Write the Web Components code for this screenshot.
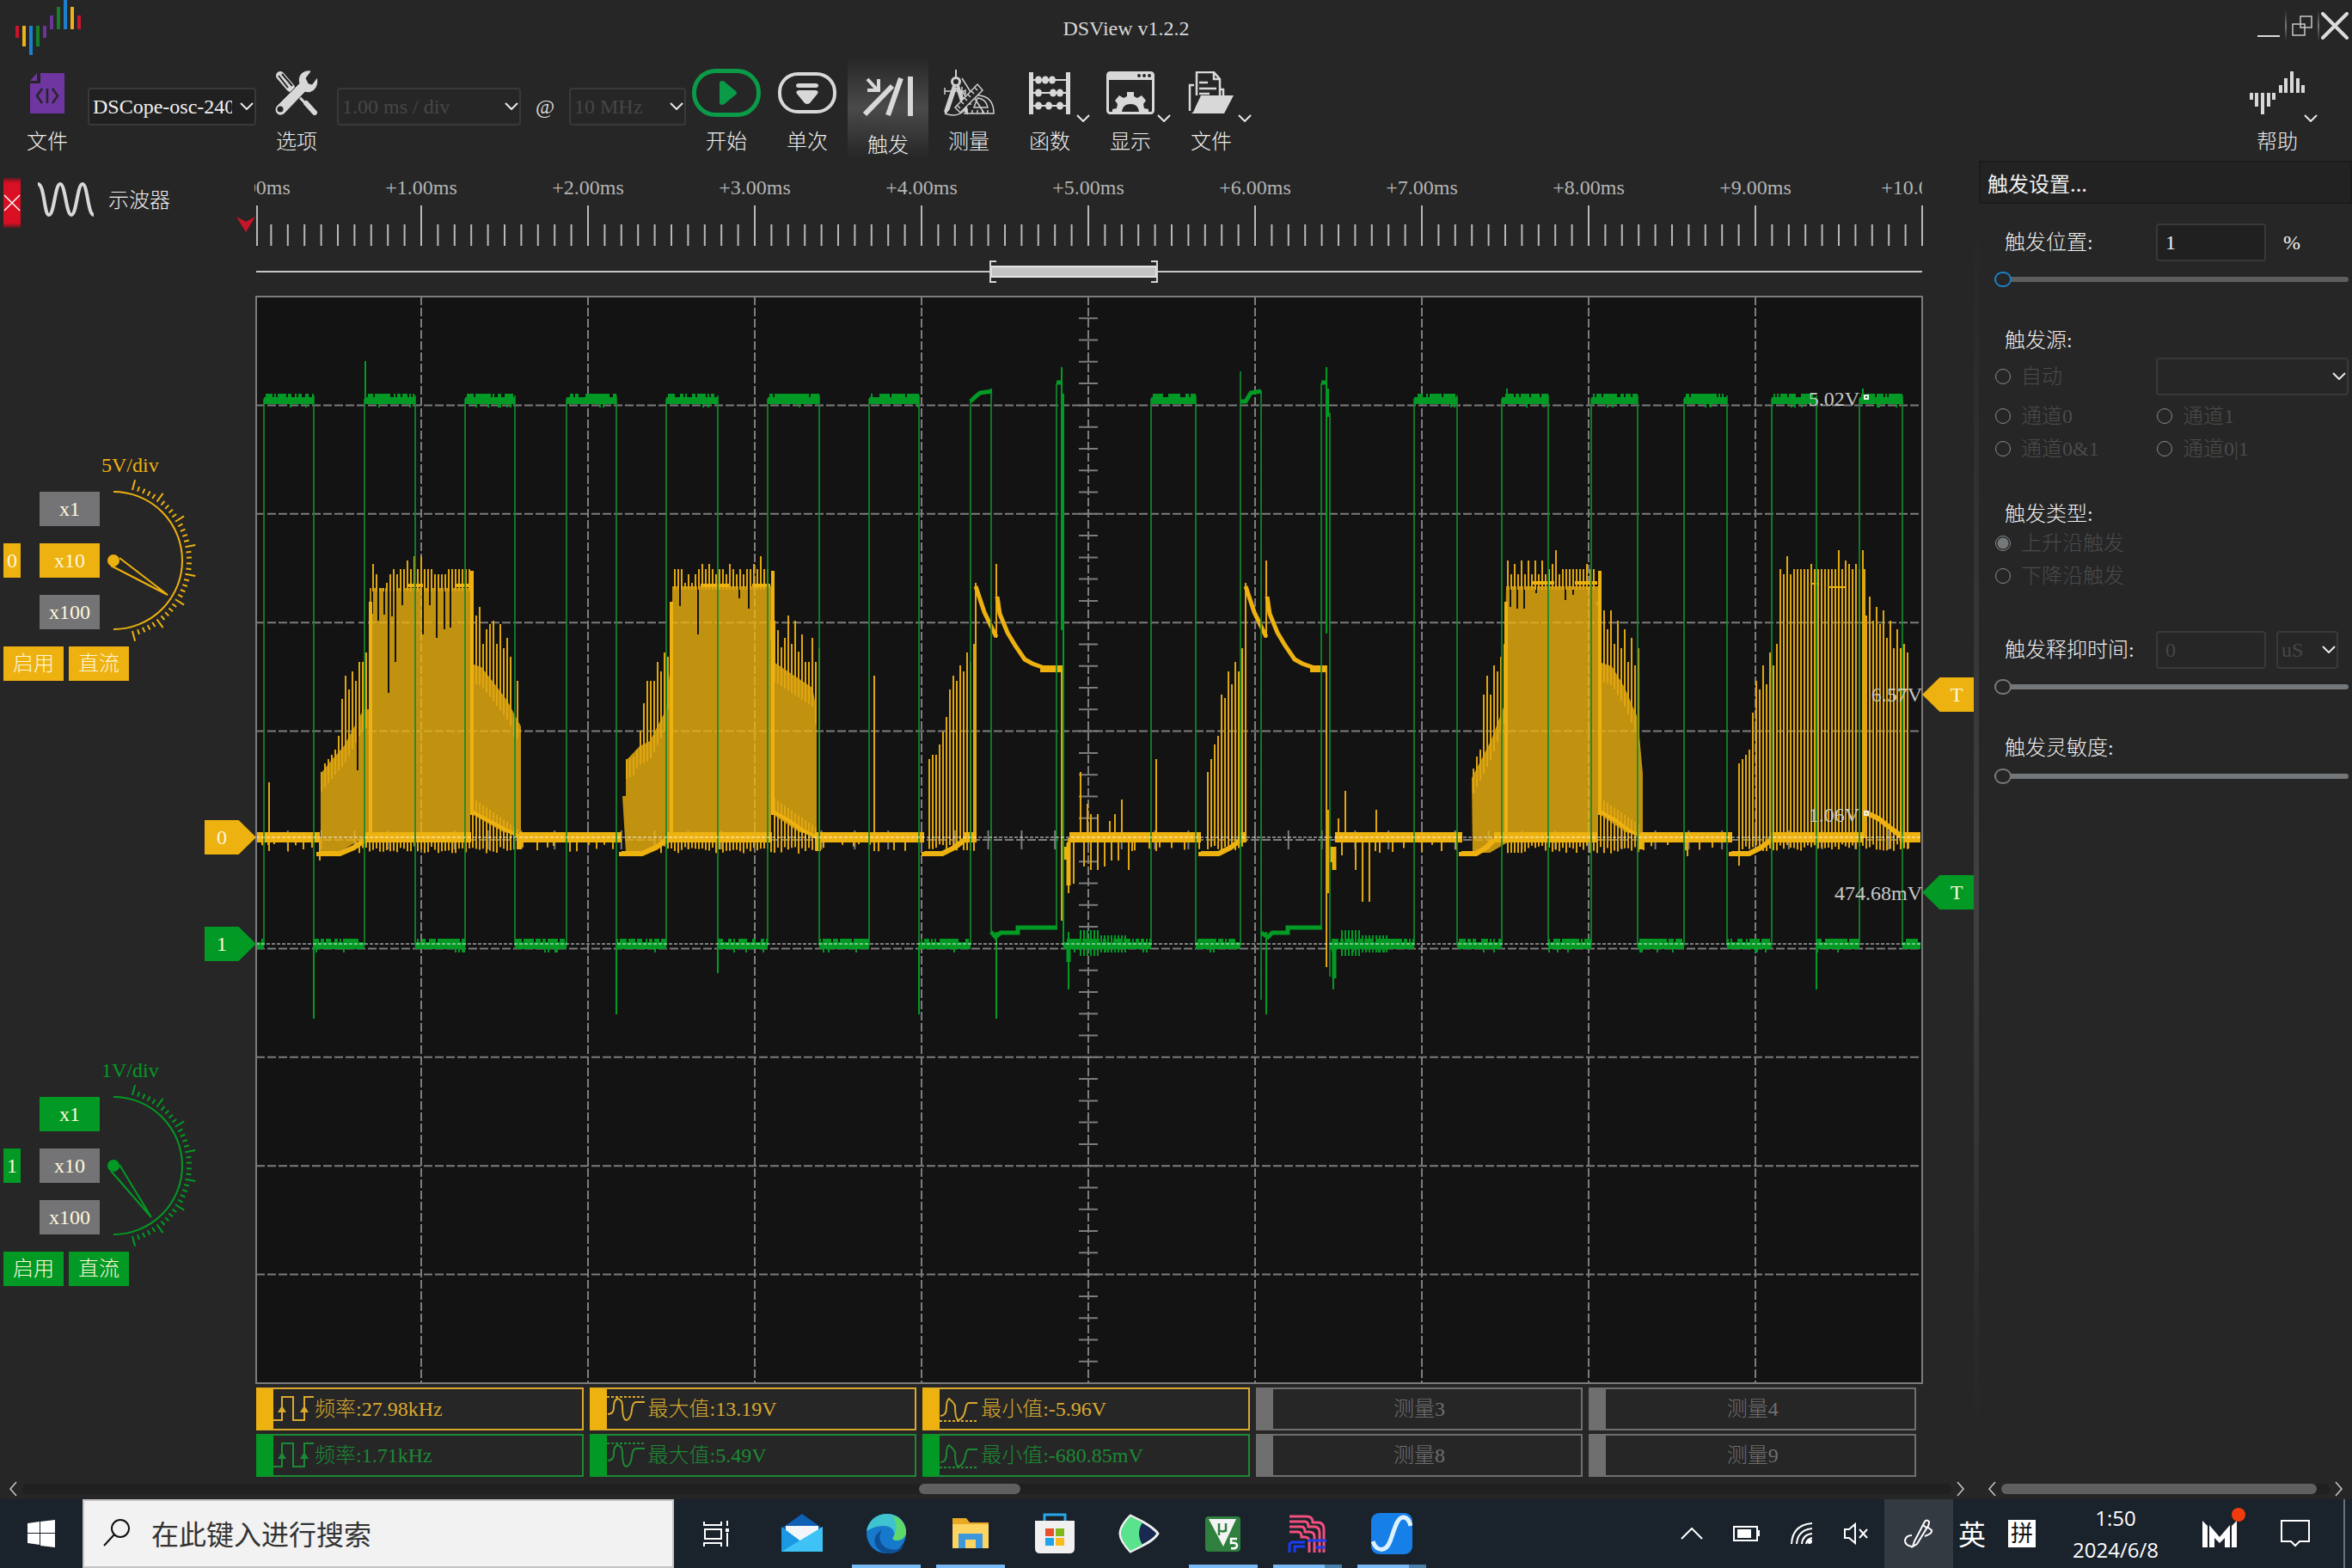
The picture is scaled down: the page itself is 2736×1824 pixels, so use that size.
<!DOCTYPE html>
<html lang="zh-CN">
<head>
<meta charset="utf-8">
<title>DSView v1.2.2</title>
<style>
    html, body { margin: 0; height: 100%; }
    body {
        --amber: #edb110;
        --green: #029a24;
        --line: #393939;
        background: #262626;
        color: #f0f0f0;
        font: 24px/30px "Liberation Serif", "Noto Sans CJK SC", serif;
        font-weight: 300;
        overflow: hidden;
    }
</style>
</head>
<body>
<dso-app></dso-app>

<script>
// shared rules for form controls inside the shadow roots
const baseCss = `
    *, *::before { box-sizing: border-box; }
    button, input, select { font: inherit; color: inherit; margin: 0; padding: 0; border: 0; background: none; }
    svg { display: block; fill: none; }
`;

const chevron = `<svg width="16" height="9" viewBox="0 0 16 9" stroke="#e8e8e8" stroke-width="2"><path d="M1 1l7 7 7-7"/></svg>`;

const icons = {
    device: `<svg width="40" height="47" viewBox="0 0 40 47"><path fill="#6f35a0" d="M12 0H40V47H0V12H12zM0 9L8 0V9z"/><g stroke="#262626" stroke-width="2.5"><path d="M14 18L8 26.500 14 35M26 18l6 8.500-6 8.500M20 18v17"/></g></svg>`,
    options: `<svg width="50" height="52" viewBox="0 0 50 52"><g stroke="#d8d8d8"><path stroke-width="10" stroke-linecap="round" d="M6 6l12 14"/><path stroke="#262626" stroke-width="2" d="M4 6l11 14M8 4l12 14"/><path stroke-width="3" d="M18 20l16 17"/><path stroke-width="6" stroke-linecap="round" d="M36 38l10 11"/></g><path fill="#d8d8d8" stroke="#262626" stroke-width="1" d="M34 1c4-2 8-1 8 0l-6 8 3 6 4 1 6-8c2 6 0 14-7 17-2 1-5 1-7 0L12 49c-3 4-8 4-10 1-3-3-2-7 0-9L28 15c-2-6 1-12 6-14z"/><circle cx="6" cy="45" r="3.500" fill="#262626"/></svg>`,
    start: `<svg width="80" height="56" viewBox="0 0 80 56"><rect x="2.500" y="2.500" width="75" height="51" rx="25" stroke="#0b9a48" stroke-width="5"/><path fill="#0b9a48" d="M32 17q0-3 3-3 3 0 5 3l11 9q2 2 0 4l-11 9q-2 3-5 3-3 0-3-3z"/></svg>`,
    single: `<svg width="68" height="48" viewBox="0 0 68 48"><rect x="2" y="2" width="64" height="44" rx="21" stroke="#d8d8d8" stroke-width="4"/><path fill="#d8d8d8" d="M24 13q-3 0-3 2.500t3 2.500h20q3 0 3-2.500t-3-2.500zM24 21q-4 1-2 4l9 11q3 2 6 0l9-11q2-3-2-4z"/></svg>`,
    trigger: `<svg width="60" height="48" viewBox="0 0 60 48" stroke="#d8d8d8"><path stroke-width="4" d="M6 4l12 13M19 4v13H6"/><path stroke-width="6" d="M3 45L35 12M30 46L45 3M56 1v46"/></svg>`,
    measure: `<svg width="60" height="54" viewBox="0 0 60 54" stroke="#d0d0d0" stroke-width="1.500"><path stroke-width="2" d="M15 0v9"/><circle cx="15" cy="14" r="4.500" stroke-width="3"/><path fill="#d0d0d0" d="M12 18L2 48l1 3 4-5 8-24zM18 18l10 28 0 5-4-4-8-25z"/><path d="M2 51q14 5 22-3M2 25h24M2 21v8M26 23v6M22 10l26 41M22 20v20h10l-9-14"/><path fill="#262626" d="M14 44L40 17l6 7-26 26z"/><path d="M37 21l3 3M33 25l3 3M29 29l3 3M25 33l3 3M21 37l3 3M17 42l3 3"/><path d="M24 51h35q0-20-18-21M36 44h16q-2-10-12-11zM28 51v-4M34 51v-4M40 51v-4M46 51v-4M52 51v-4"/></svg>`,
    math: `<svg width="48" height="49" viewBox="0 0 48 49"><g fill="#d8d8d8"><path d="M0 0h5v49H0zM43 0h5v49h-5z"/><ellipse cx="11" cy="9" rx="4" ry="4.500"/><ellipse cx="19" cy="9" rx="4" ry="4.500"/><ellipse cx="27" cy="9" rx="4" ry="4.500"/><ellipse cx="11" cy="24" rx="4" ry="4.500"/><ellipse cx="28" cy="24" rx="4" ry="4.500"/><ellipse cx="36" cy="24" rx="4" ry="4.500"/><ellipse cx="11" cy="39" rx="4" ry="4.500"/><ellipse cx="23" cy="39" rx="4" ry="4.500"/><ellipse cx="36" cy="39" rx="4" ry="4.500"/></g><path stroke="#d8d8d8" stroke-width="2" d="M4 9h40M4 24h40M4 39h40"/></svg>`,
    display: `<svg width="56" height="50" viewBox="0 0 56 50"><rect x="1.500" y="1.500" width="53" height="47" rx="3" stroke="#d8d8d8" stroke-width="3"/><path fill="#d8d8d8" d="M1 1h54v9H1z"/><g fill="#262626"><circle cx="38" cy="5" r="2"/><circle cx="44" cy="5" r="2"/><circle cx="50" cy="5" r="2"/></g><path fill="#d8d8d8" d="M24 24h8v5l4 2 5-3 5 6-3 4 1 5 5 1v5H7v-5l5-1 1-5-3-4 5-6 5 3 4-2z"/><path fill="#262626" d="M18 47q1-9 10-9t10 9z"/></svg>`,
    file: `<svg width="54" height="50" viewBox="0 0 54 50"><path stroke="#d8d8d8" stroke-width="2.500" d="M10 28V1h20l7 8v19M30 1v8h7M13 13h10M13 20h20M13 26h12M7 16H2v30M37 21h4v7"/><path fill="#d8d8d8" d="M15 28h38L42 49H3q3 0 5-6z"/></svg>`,
    help: `<svg width="66" height="50" viewBox="0 0 66 50" stroke="#d8d8d8" stroke-width="4"><path d="M3 25v8M9 25v16M16 25v25M23 25v16M29 25v8M37 16v9M43 8v17M50 0v25M57 8v17M63 16v9"/></svg>`
};

class ToolButton extends HTMLElement {
    constructor() {
        super();
        this.attachShadow({ mode: 'open' });
    }

    connectedCallback() {
        this.shadowRoot.innerHTML = `
            <style>${baseCss}
                :host { display: block; flex: none; width: 94px; }
                :host([narrow]) { width: 78px; }
                button {
                    position: relative;
                    display: flex;
                    flex-direction: column;
                    align-items: center;
                    gap: 14px;
                    width: 100%;
                    height: 118px;
                    padding-top: 14px;
                    cursor: pointer;
                }
                :host([active]) button {
                    padding-top: 18px;
                    background: linear-gradient(#262626, #4a4a4a 50%, #262626);
                }
                .icon { height: 56px; display: flex; align-items: center; }
                .more { position: absolute; right: 0; top: 67px; }
            </style>
            <button type="button">
                <span class="icon">${icons[this.getAttribute('icon')]}</span>
                <span><slot></slot></span>
                ${this.hasAttribute('more') ? `<span class="more">${chevron}</span>` : ''}
            </button>
        `;
    }
}
customElements.define('tool-button', ToolButton);


class ComboBox extends HTMLElement {
    constructor() {
        super();
        this.attachShadow({ mode: 'open' });
    }

    connectedCallback() {
        const off = this.hasAttribute('disabled') ? 'disabled' : '';
        this.shadowRoot.innerHTML = `
            <style>${baseCss}
                :host { display: block; position: relative; height: 44px; }
                select {
                    appearance: none;
                    width: 100%;
                    height: 100%;
                    padding: 0 26px 0 4px;
                    border: 2px solid var(--line);
                    border-radius: 4px;
                    background: #202020;
                    line-height: 40px;
                }
                select:disabled { background: #262626; color: #464646; opacity: 1; }
                span { position: absolute; right: 3px; top: 17px; pointer-events: none; }
            </style>
            <select aria-label="${this.getAttribute('name')}" ${off}><option>${this.getAttribute('value') || ''}</option></select>
            <span>${chevron}</span>
        `;
    }
}
customElements.define('combo-box', ComboBox);


class TitleBar extends HTMLElement {
    constructor() {
        super();
        this.attachShadow({ mode: 'open' }).innerHTML = `
            <style>${baseCss}
                :host { display: grid; grid-template-columns: 1fr 116px; height: 66px; }
                .logo, h1 { grid-area: 1 / 1; }
                .logo { margin-left: 18px; }
                h1 { margin: 18px 0 0; font: inherit; text-align: center; color: #d8d8d8; }
                nav { display: flex; align-items: center; height: 60px; }
                button { width: 38px; height: 34px; display: grid; place-items: center; }
                button + button { border-left: 2px solid; border-image: linear-gradient(#262626, #777, #262626) 1; }
            </style>
            <svg class="logo" width="76" height="64" viewBox="0 0 76 64" stroke-width="4">
                <path stroke="#c8142c" d="M2 30v14M74 18v16"/>
                <path stroke="#edb11c" d="M10 30v24M66 8v26"/>
                <path stroke="#1c80cc" d="M18 30v34M58 0v34"/>
                <path stroke="#15802a" d="M26 30v24M50 8v26"/>
                <path stroke="#6a3596" d="M34 30v14M42 18v16"/>
            </svg>
            <h1>DSView v1.2.2</h1>
            <nav>
                <button type="button" aria-label="最小化"><svg width="26" height="26" viewBox="0 0 26 26"><path stroke="#d8d8d8" stroke-width="2" d="M0 25h26"/></svg></button>
                <button type="button" aria-label="还原"><svg width="24" height="24" viewBox="0 0 24 24" stroke="#c8c8c8" stroke-width="1.500"><path d="M1 10h14v13H1zM10 1h13v13H10z"/></svg></button>
                <button type="button" aria-label="关闭"><svg width="32" height="32" viewBox="0 0 32 32" stroke="#dcdcdc" stroke-width="4" stroke-linecap="round"><path d="M2 2l28 28M30 2L2 30"/></svg></button>
            </nav>
        `;
    }
}
customElements.define('title-bar', TitleBar);


class ToolBar extends HTMLElement {
    constructor() {
        super();
        this.attachShadow({ mode: 'open' }).innerHTML = `
            <style>${baseCss}
                :host { display: flex; height: 121px; padding: 0 40px 0 16px; }
                combo-box { flex: none; margin-top: 36px; }
                .device { width: 196px; margin-left: 8px; }
                .time { width: 214px; }
                .rate { width: 136px; }
                .at { width: 56px; margin-top: 43px; text-align: center; color: #d8d8d8; }
                .help { margin-left: auto; }
            </style>
            <tool-button narrow icon="device">文件</tool-button>
            <combo-box class="device" name="设备" value="DSCope-osc-240"></combo-box>
            <tool-button icon="options">选项</tool-button>
            <combo-box class="time" name="时基" value="1.00 ms / div" disabled></combo-box>
            <span class="at">@</span>
            <combo-box class="rate" name="采样率" value="10 MHz" disabled></combo-box>
            <tool-button icon="start">开始</tool-button>
            <tool-button icon="single">单次</tool-button>
            <tool-button icon="trigger" active>触发</tool-button>
            <tool-button icon="measure">测量</tool-button>
            <tool-button icon="math" more>函数</tool-button>
            <tool-button icon="display" more>显示</tool-button>
            <tool-button icon="file" more>文件</tool-button>
            <tool-button class="help" icon="help" more>帮助</tool-button>
        `;
    }
}
customElements.define('tool-bar', ToolBar);


class ChannelControl extends HTMLElement {
    constructor() {
        super();
        this.attachShadow({ mode: 'open' });
    }

    // tick marks run from 15 to 165 degrees, every fifth one is long
    ticks() {
        let d = '';
        for (let i = 0; i <= 35; i++) {
            const a = (15 + i * 150 / 35) * Math.PI / 180;
            const r = i % 5 ? 91 : 97;
            d += `M${16 + 85 * Math.sin(a)} ${80 - 85 * Math.cos(a)}L${16 + r * Math.sin(a)} ${80 - r * Math.cos(a)}`;
        }
        return d;
    }

    connectedCallback() {
        const on = this.getAttribute('factor');
        const factors = ['x1', 'x10', 'x100'].map(f => `<button type="button" class="${f === on ? 'on' : ''}">${f}</button>`).join('');
        this.shadowRoot.innerHTML = `
            <style>${baseCss}
                :host { display: block; padding-left: 4px; color: #fff8dc; }
                .scale { width: 70px; height: 28px; margin-left: 114px; color: var(--ch); line-height: 26px; white-space: nowrap; }
                .row { display: flex; align-items: center; margin: 16px 0 20px; }
                .no { width: 20px; height: 40px; background: var(--ch); line-height: 40px; text-align: center; }
                .factors { display: grid; gap: 20px; margin-left: 22px; }
                button { width: 70px; height: 40px; background: #747476; line-height: 40px; text-align: center; }
                .on { background: var(--ch); }
                .bottom { display: flex; gap: 6px; }
                .row svg { overflow: visible; stroke: var(--ch); stroke-width: 2; }
            </style>
            <div class="scale">${this.getAttribute('scale')}</div>
            <div class="row">
                <span class="no">${this.getAttribute('no')}</span>
                <div class="factors">${factors}</div>
                <svg width="110" height="160" viewBox="0 0 110 160">
                    <path d="M16 0a80 80 0 0 1 0 160"/>
                    <path d="${this.ticks()}"/>
                    <circle cx="16" cy="80" r="6" fill="var(--ch)"/>
                    <path d="${this.getAttribute('needle')}"/>
                </svg>
            </div>
            <div class="bottom"><button type="button" class="on">启用</button><button type="button" class="on">直流</button></div>
        `;
    }
}
customElements.define('channel-control', ChannelControl);


class ChannelPanel extends HTMLElement {
    constructor() {
        super();
        this.attachShadow({ mode: 'open' }).innerHTML = `
            <style>${baseCss}
                :host { display: block; }
                header { display: flex; align-items: center; height: 58px; margin-top: 20px; padding-left: 4px; }
                .close { width: 20px; height: 58px; background: linear-gradient(#5c1a20, #d90f24 10%, #d90f24 90%, #5c1a20); display: grid; place-items: center; }
                .wave { margin: 0 16px 8px 19px; }
                header span { margin-bottom: 6px; }
                .ch0 { --ch: var(--amber); margin-top: 263px; }
                .ch1 { --ch: var(--green); margin-top: 440px; }
            </style>
            <header>
                <button class="close" type="button" aria-label="关闭"><svg width="20" height="22" viewBox="0 0 20 22" stroke="#fff" stroke-width="1.500"><path d="M1 2l18 18M19 2L1 20"/></svg></button>
                <svg class="wave" width="67" height="40" viewBox="0 0 67 40" stroke="#d8d8d8" stroke-width="4"><path d="M1 2C9 2 8 38 14 38S21 2 27 2s7 36 13 36S47 2 53 2s6 36 13 36"/></svg>
                <span>示波器</span>
            </header>
            <channel-control class="ch0" no="0" scale="5V/div" factor="x10" needle="M23 77L79 120 13 86"></channel-control>
            <channel-control class="ch1" no="1" scale="1V/div" factor="x1" needle="M23 79L60 140 13 86"></channel-control>
        `;
    }
}
customElements.define('channel-panel', ChannelPanel);


class TimeRuler extends HTMLElement {
    constructor() {
        super();
        this.attachShadow({ mode: 'open' });
    }

    connectedCallback() {
        let ticks = 'M299 239V286';
        for (let i = 1; i <= 100; i++) {
            const x = 296 + i * 19.4;
            ticks += `M${x.toFixed(1)} ${i % 10 ? 261 : 239}V286`;
        }
        let labels = '';
        for (let i = 0; i <= 10; i++) {
            labels += `<span style="left:${i * 10}%">+${i}.00ms</span>`;
        }
        this.shadowRoot.innerHTML = `
            <style>${baseCss}
                :host { display: block; position: relative; height: 158px; }
                .labels { position: absolute; inset: 16px 0 auto -2px; height: 30px; overflow: hidden; color: #b4b4b4; }
                .labels span { position: absolute; transform: translateX(-50%); }
                svg { position: absolute; inset: 0; width: 100%; height: 158px; overflow: visible; }
            </style>
            <div class="labels">${labels}</div>
            <svg viewBox="298 187 1938 158" preserveAspectRatio="none">
                <path stroke="#b8b8b8" stroke-width="2" d="${ticks}"/>
                <path fill="#c81428" d="M275 252l11 6 11-6-11 18z"/>
                <path stroke="#c4c4c4" stroke-width="2" d="M298 316H2236"/>
                <path fill="#c3c3c5" stroke="#e4e4e4" stroke-width="2" d="M1153 310H1345V322H1153z"/>
                <path stroke="#d4d4d4" stroke-width="2" d="M1159 304h-7v24h7M1339 304h7v24h-7"/>
            </svg>
        `;
    }
}
customElements.define('time-ruler', TimeRuler);


// Bursts of channel 0: first spike x and spike tops, one spike each 4px
const bursts = [
    {
        x: 373,
        tops: [898, 888, 883, 878, 872, 856, 813, 786, 802, 781, 792, 770, 770, 759, 754,
            656, 668, 684, 684, 678, 668, 662, 668, 662, 662, 652, 662, 647, 662, 647, 662, 662, 662, 668, 668, 668, 668, 662, 662, 662, 662, 662, 662, 662,
            754, 716, 706, 749, 732, 726, 722, 749, 726, 754, 742, 764, 835, 792],
        body: [[373, 900], [385, 885], [400, 868], [423, 825], [430, 825], [430, 684], [548, 684], [548, 772], [560, 776], [575, 795], [590, 815], [598, 830], [606, 845], [606, 976]],
        gaps: [[416, 700, 896], [433, 662, 714], [440, 662, 722], [447, 662, 715], [452, 662, 806], [456, 662, 717], [460, 662, 770], [468, 662, 704], [492, 662, 738], [500, 662, 704], [508, 662, 742], [517, 662, 732], [524, 662, 730]],
        step: 431, fall: 547, end: 606
    },
    {
        x: 728,
        tops: [883, 882, 880, 872, 850, 818, 792, 792, 792, 770, 781, 759, 764, 749,
            662, 662, 662, 678, 668, 678, 668, 662, 656, 662, 656, 662, 668, 662, 662, 668, 656, 662, 668, 662, 668, 662, 662, 656, 662, 647, 662, 662,
            722, 722, 733, 753, 742, 716, 749, 722, 758, 738, 770, 770, 742, 770, 754],
        body: [[724, 926], [728, 926], [728, 885], [744, 868], [756, 862], [775, 825], [782, 749], [782, 682], [897, 682], [900, 770], [915, 780], [930, 790], [945, 800], [950, 826], [950, 976]],
        gaps: [[791, 680, 705], [812, 680, 738], [860, 680, 696], [871, 680, 708]],
        step: 781, fall: 897, end: 950
    },
    {
        x: 1713,
        tops: [894, 880, 872, 808, 786, 808, 774, 781, 764, 749,
            652, 668, 656, 668, 652, 668, 652, 668, 652, 668, 652, 668, 662, 656, 640, 668, 662, 662, 662, 662, 662, 662, 662, 656, 662, 662,
            700, 726, 710, 732, 710, 749, 722, 754, 732, 770, 742, 774, 754],
        body: [[1712, 905], [1725, 880], [1735, 860], [1750, 820], [1752, 682], [1859, 682], [1860, 770], [1875, 775], [1890, 800], [1905, 835], [1911, 900], [1911, 976]],
        gaps: [[1757, 680, 706], [1765, 680, 708], [1773, 680, 708], [1787, 680, 690], [1821, 680, 698], [1830, 680, 692]],
        step: 1752, fall: 1859, end: 1911
    }
];

// sparse bursts, drawn as single lines only
const combs = [
    [1081, [883, 878, 878, 866, 851, 834, 802, 786, 792, 774, 781, 759, 770, 749]],
    [1405, [898, 883, 866, 856, 808, 812, 781, 796, 770, 781, 754]],
    [2023, [888, 883, 878, 872, 829, 792, 802, 774, 796, 759, 774, 749,
        662, 668, 647, 668, 662, 662, 662, 662, 662, 656, 662, 662, 662, 662, 662, 662, 662, 640, 662, 652, 656, 662, 656, 662, 640,
        716, 694, 722, 706, 726, 710, 742, 722, 754, 732, 754, 749, 759]]
];

// channel 1 edges: x where it goes high, x where it goes low
const pulses = [[307, 365], [424, 483], [541, 599], [659, 717], [775, 835], [893, 953], [1011, 1069],
    [1339, 1391], [1645, 1695], [1747, 1801], [1851, 1905], [1959, 2009], [2061, 2113], [2163, 2213]];

class WaveView extends HTMLElement {
    constructor() {
        super();
        this.attachShadow({ mode: 'open' });
        this.seed = 7;
    }

    rand() {
        this.seed = (this.seed * 16807) % 2147483647;
        return this.seed / 2147483647;
    }

    grid() {
        let dash = '';
        let solid = '';
        for (let i = 1; i < 10; i++) {
            dash += `M298 ${(345 + i * 126.4).toFixed(1)}H2236M${296 + i * 194} 345V1609`;
        }
        for (let i = 1; i < 50; i++) {
            solid += `M1255 ${(345 + i * 25.28).toFixed(1)}h22M${(296 + i * 38.8).toFixed(1)} 966v22`;
        }
        return `<path stroke="#7c7c7c" stroke-width="2" stroke-dasharray="10 3" d="${dash}"/>
            <path stroke="#7c7c7c" stroke-width="2" d="${solid}"/>`;
    }

    amber() {
        let fill = '';
        let lines = '';
        let gaps = '';
        let bright = '';
        bursts.forEach(b => {
            const low = `L${b.end} 972L${b.end - 20} 968L${b.fall} 946V978H${b.x + 44}L${b.x + 20} 992H${b.x}Z`;
            fill += 'M' + b.body.map(p => p.join(' ')).join('L') + low;
            b.tops.forEach((top, i) => {
                const x = b.x + i * 4 + 1;
                const mid = this.bodyTop(b.body, x);
                lines += `M${x} ${top}V${Math.max(mid, top) + (x > b.step && x < b.fall ? 4 : 22)}`;
                if (x > b.fall) {
                    lines += `M${x} ${926 + (x - b.fall) * 0.7}V${985 + this.rand() * 8}`;
                } else if (x > b.x + 40) {
                    lines += `M${x} 978V${984 + this.rand() * 9}`;
                }
            });
            b.gaps.forEach(g => gaps += `M${g[0]} ${g[1]}V${g[2]}`);
            bright += `M${b.step} ${700}V972M${b.fall + 2} 664V948`;
            bright += `M${b.fall + 2} 944L${b.fall + 20} 954 ${b.end - 16} 966 ${b.end} 974`;
        });
        combs.forEach(([x0, tops]) => tops.forEach((t, i) => lines += `M${x0 + i * 4} ${t}V${982 + this.rand() * 8}`));

        // single spikes off the baseline: x, from, to
        const spikes = [[313, 910, 990], [1017, 786, 990], [1345, 883, 990], [1135, 678, 975], [1159, 656, 742], [1235, 774, 1071],
            [1257, 898, 975], [1265, 935, 975], [1269, 947, 975], [1277, 947, 975], [1297, 947, 975], [1305, 930, 975], [1291, 955, 975],
            [1243, 975, 1039], [1249, 975, 1028], [1261, 975, 1008], [1269, 975, 1012], [1277, 975, 1012], [1285, 975, 1008],
            [1293, 975, 1001], [1301, 975, 1001], [1313, 975, 1012], [1317, 975, 990], [1449, 678, 975], [1473, 652, 742],
            [1543, 774, 1125], [1545, 942, 1039], [1557, 952, 975], [1565, 920, 975], [1601, 942, 975], [1577, 975, 1012],
            [1585, 975, 1049], [1593, 975, 1049], [1561, 975, 995], [1605, 975, 992], [2169, 662, 975], [1963, 975, 996], [2023, 985, 1007], [372, 975, 1001]];
        spikes.forEach(s => lines += `M${s[0]} ${s[1]}V${s[2]}`);

        // short noise ticks below the flat parts
        [[298, 370], [608, 720], [958, 1074], [1320, 1396], [1600, 1698], [1912, 2012], [2220, 2234]].forEach(([a, b]) => {
            for (let x = a; x < b; x += 6 + Math.round(this.rand() * 16)) {
                lines += `M${x} 978V${982 + this.rand() * 9}`;
            }
        });

        const flats = 'M298 974H372M425 974H548M604 974H723M776 974H898M948 974H1075M1122 974H1136M1244 974H1397M1443 974H1450M1553 974H1701M1738 974H1858M1908 974H2015M2060 974H2168M2210 974H2234';
        const dips = [[371, 425], [723, 776], [1075, 1122], [1397, 1443], [1700, 1738], [2014, 2060]]
            .map(([a, b]) => `M${a} 991V993H${a + (b - a) * 0.45}L${a + (b - a) * 0.75} 986L${b} 977`).join('');
        const decay = x => `M${x} 682L${x + 10} 712 ${x + 24} 741M${x + 25} 694L${x + 28} 714 ${x + 37} 736 ${x + 46} 751 ${x + 57} 767 ${x + 66} 772 ${x + 80} 777`;

        return `
            <path fill="#edb110" fill-opacity=".8" d="${fill}"/>
            <path stroke="#131313" stroke-width="2" d="${gaps}"/>
            <path stroke="#e0a610" stroke-width="2" d="${lines}"/>
            <path stroke="#edb110" stroke-width="4" d="${bright}"/>
            <path stroke="#edb110" stroke-width="4" d="M475 681H492M530 681H548M815 681H848M875 681H896M1782 678H1808M1832 678H1858"/>
            <path stroke="#edb110" stroke-width="2" d="M2108 679H2116M2128 683H2148"/>
            <path stroke="#edb110" stroke-width="12" d="${flats}"/>
            <path stroke="#edb110" stroke-width="6" d="${dips}M2170 945L2185 952 2200 964 2216 976M604 974V988M952 974V990M1908 974V988"/>
            <path stroke="#edb110" stroke-width="5" d="${decay(1135)}${decay(1449)}M1239 985V1000M1243 980V1030M1549 985V1003M1552 985V1012"/>
            <path stroke="#edb110" stroke-width="8" d="M1210 778H1236M1524 778H1543"/>`;
    }

    // height of the filled body outline at x
    bodyTop(points, x) {
        for (let i = 1; i < points.length; i++) {
            const [x1, y1] = points[i - 1];
            const [x2, y2] = points[i];
            if (x >= x1 && x < x2) return y1 + (y2 - y1) * (x - x1) / (x2 - x1);
        }
        return 950;
    }

    green() {
        let edges = '';
        let bands = '';
        let noise = '';
        const addNoise = (a, b, top, low) => {
            for (let x = a; x < b; x += 2) {
                const r = this.rand();
                if (r > 0.25) noise += `M${x} ${top}V${top + 6}`;
                if (r > 0.9) noise += `M${x} ${low}V${low + 4}`;
            }
        };
        pulses.forEach(([a, b]) => {
            edges += `M${a} 464V1100M${b} 460V1100`;
            bands += `M${a} 466H${b}`;
            addNoise(a + 3, b, 458, 470);
        });
        const lows = [[298, 307], [365, 424], [483, 541], [599, 659], [717, 775], [835, 893], [953, 1011], [1069, 1129],
            [1237, 1339], [1391, 1443], [1547, 1645], [1695, 1747], [1801, 1851], [1905, 1959], [2009, 2061], [2113, 2163], [2213, 2234]];
        lows.forEach(([a, b]) => {
            bands += `M${a} 1100H${b}`;
            addNoise(a + 1, b, 1092, 1104);
        });
        edges += 'M1129 466V1100M1153 452V1086M1229 446V1080M1237 460V1100M1443 432V1100M1467 454V1163M1537 446V1080M1547 480V1136';
        const spikes = 'M425 420V470M365 1100V1185M717 1100V1180M835 1100V1132M1069 1100V1180M1159 1084V1185M1243 1084V1151M1235 427V733M1237 458V1100M1473 1084V1180M1543 427V737M1545 452V485M1551 1100V1151M2113 1100V1151M1753 452V465M2167 452V465';
        // ringing after the two fast drops
        let ring = '';
        for (let i = 0; i < 14; i++) {
            const up = i < 6 ? 18 : 12;
            const down = i < 6 ? 12 : 8;
            const x = i * 4;
            ring += `M${1257 + x} ${1100 - up}V${1100 + down}M${1561 + x} ${1100 - up}V${1100 + down}`;
        }
        return `
            <path stroke="#128a2c" stroke-width="2" stroke-opacity=".85" d="${edges}"/>
            <path stroke="#029a24" stroke-width="2" d="${spikes}${noise}${ring}"/>
            <path stroke="#029a24" stroke-width="8" d="${bands}"/>
            <path stroke="#029a24" stroke-width="5" d="M1129 467L1134 462 1140 457 1154 455M1443 467H1449L1455 457 1467 455M1229 445H1236M1537 445H1544M1153 1084L1158 1090 1164 1085H1184V1079H1230M1467 1085L1475 1090 1480 1085H1498V1079H1538M1243 1100V1119M1552 1100V1138"/>`;
    }

    connectedCallback() {
        this.shadowRoot.innerHTML = `
            <style>${baseCss}
                :host { display: block; position: relative; min-height: 0; }
                .plot { width: 100%; height: 100%; background: #131313; overflow: visible; }
                .mark { position: absolute; height: 40px; line-height: 40px; margin-top: -20px; text-align: center; color: #fff8dc; }
                .zero { right: 100%; width: 60px; padding-right: 20px; clip-path: polygon(0 0, 66% 0, 100% 50%, 66% 100%, 0 100%); }
                .trig { left: 100%; width: 60px; padding-left: 20px; clip-path: polygon(34% 0, 100% 0, 100% 100%, 34% 100%, 0 50%); }
                .a { background: var(--amber); }
                .g { background: var(--green); }
                .val { position: absolute; right: 0; margin-top: -16px; color: #c8c8c8; }
                .cursor { right: 73px; }
            </style>
            <svg class="plot" viewBox="298 345 1938 1264" preserveAspectRatio="none">
                ${this.grid()}
                ${this.amber()}
                ${this.green()}
                <path stroke="#fff" stroke-opacity=".45" stroke-width="2" stroke-dasharray="4 2" d="M298 974H2236M298 1098H2236"/>
                <path stroke="#eee" stroke-width="2" d="M2169 460h4v4h-4zM2169 944h4v4h-4z"/>
                <path stroke="#7c7c7c" stroke-width="2" d="M298 345H2236V1609H298z"/>
            </svg>
            <button type="button" class="mark zero a" style="top:49.760%">0</button>
            <button type="button" class="mark zero g" style="top:59.570%">1</button>
            <button type="button" class="mark trig a" style="top:36.630%">T</button>
            <button type="button" class="mark trig g" style="top:54.830%">T</button>
            <span class="val cursor" style="top:9.500%">5.02V</span>
            <span class="val cursor" style="top:47.780%">1.06V</span>
            <span class="val" style="top:36.710%">6.57V</span>
            <span class="val" style="top:54.980%">474.68mV</span>
        `;
    }
}
customElements.define('wave-view', WaveView);


const measureIcons = {
    freq: `<path d="M0 29H10V2H23V29H36V2H47"/><path fill="currentColor" stroke="none" d="M10 12l5 8H5zM36 12l5 8H31z"/>`,
    max: `<path stroke-dasharray="3 2" d="M0 2h44"/><path d="M1 22q7 0 7-8 0-8 4-10 6 1 6 8 0 17 5 17 5-2 6-12 1-9 5-9h10"/>`,
    min: `<path stroke-dasharray="3 2" d="M0 30h44"/><path d="M1 24q7 0 7-10 0-8 3-10 5 4 7 8 0 16 4 17 6-2 8-12 1-8 4-8h10"/>`
};

class MeasureCell extends HTMLElement {
    constructor() {
        super();
        this.attachShadow({ mode: 'open' });
    }

    connectedCallback() {
        const icon = measureIcons[this.getAttribute('icon')];
        this.shadowRoot.innerHTML = `
            <style>${baseCss}
                :host { display: flex; height: 50px; color: #6f6f6f; }
                :host([ch="0"]) { color: #d9a92f; --bar: var(--amber); }
                :host([ch="1"]) { color: #1c8a34; --bar: var(--green); }
                button {
                    display: flex;
                    align-items: center;
                    flex: 1;
                    border: 2px solid;
                    border-left: 20px solid var(--bar, #6f6f6f);
                    white-space: nowrap;
                    ${icon ? '' : 'justify-content: center; padding-right: 18px;'}
                }
                svg { margin-right: 1px; stroke: currentColor; stroke-width: 2; }
            </style>
            <button type="button">${icon ? `<svg width="47" height="32" viewBox="0 0 47 32">${icon}</svg>` : ''}<slot></slot></button>
        `;
    }
}
customElements.define('measure-cell', MeasureCell);


class ScrollStrip extends HTMLElement {
    constructor() {
        super();
        this.attachShadow({ mode: 'open' }).innerHTML = `
            <style>${baseCss}
                :host { display: flex; align-items: center; height: 24px; }
                .track { flex: 1; height: 12px; margin: 0 6px; border-radius: 6px; background: #202020; }
                .thumb { width: var(--size); height: 12px; margin-left: var(--at); border-radius: 6px; background: #606060; }
                button { width: 10px; height: 18px; }
            </style>
            <button type="button" aria-label="向左"><svg width="10" height="18" viewBox="0 0 10 18" stroke="#c8c8c8" stroke-width="1.500"><path d="M9 1L2 9l7 8"/></svg></button>
            <div class="track"><div class="thumb"></div></div>
            <button type="button" aria-label="向右"><svg width="10" height="18" viewBox="0 0 10 18" stroke="#c8c8c8" stroke-width="1.500"><path d="M1 1l7 8-7 8"/></svg></button>
        `;
    }
}
customElements.define('scroll-strip', ScrollStrip);


class TriggerPanel extends HTMLElement {
    constructor() {
        super();
        this.attachShadow({ mode: 'open' }).innerHTML = `
            <style>${baseCss}
                :host { display: flex; flex-direction: column; }
                h2 {
                    height: 50px;
                    margin: 0;
                    padding-left: 8px;
                    border: 2px solid #1c1c1c;
                    background: #222;
                    font: 400 24px/48px "Noto Sans CJK SC", sans-serif;
                }
                form { flex: 1; padding: 0 4px 0 18px; }
                .field { display: grid; grid-template-columns: 176px 128px 12px 1fr; align-items: center; height: 44px; padding-left: 12px; }
                .position { margin-top: 23px; }
                .holdoff { margin-top: 45px; }
                .unit { grid-column: 4; padding-left: 8px; }
                .field combo-box { grid-column: 4; width: 72px; }
                .caption { display: block; height: 30px; margin-top: 46px; padding-left: 12px; }
                input[type=text] { width: 128px; height: 44px; padding-left: 9px; border: 2px solid var(--line); border-radius: 4px; background: #202020; }
                input[type=text]:disabled { background: #262626; color: #464646; }
                input[type=range] { appearance: none; display: block; width: 100%; height: 20px; --c: #75787a; }
                input[type=range]::-webkit-slider-runnable-track { height: 6px; border-radius: 3px; background: var(--rail, #75787a); }
                input[type=range]::-webkit-slider-thumb {
                    appearance: none;
                    width: 20px;
                    height: 18px;
                    margin-top: -6px;
                    border: 2px solid var(--c);
                    border-radius: 9px;
                    background: #262626;
                }
                input[type=range].blue { --c: #1c80c4; --rail: #5e5e5e; }
                .gap { margin-top: 11px; }
                .tight { margin-top: 8px; }
                .source { display: grid; grid-template-columns: 188px 1fr; align-items: center; }
                .source > :nth-child(-n+2) { margin: 5px 0; }
                .source + .caption { margin-top: 42px; }
                label.pick { display: flex; align-items: center; gap: 12px; height: 38px; padding-left: 1px; color: #4b4b4b; }
                input[type=radio] { appearance: none; width: 18px; height: 18px; border: 1px solid #8a8a8a; border-radius: 50%; }
                input[type=radio]:checked { background: radial-gradient(circle, #75787a 0 6px, #262626 7px); }
                scroll-strip { --size: 96%; --at: 0; margin: 0 10px; }
            </style>
            <h2>触发设置...</h2>
            <form>
                <div class="field position">
                    <label for="pos">触发位置:</label>
                    <input id="pos" type="text" value="1">
                    <span class="unit">%</span>
                </div>
                <input class="blue gap" type="range" value="0" aria-label="触发位置">
                <span class="caption">触发源:</span>
                <div class="source">
                    <label class="pick"><input type="radio" name="src" disabled>自动</label>
                    <combo-box name="触发源" disabled></combo-box>
                    <label class="pick"><input type="radio" name="src" disabled>通道0</label>
                    <label class="pick"><input type="radio" name="src" disabled>通道1</label>
                    <label class="pick"><input type="radio" name="src" disabled>通道0&amp;1</label>
                    <label class="pick"><input type="radio" name="src" disabled>通道0|1</label>
                </div>
                <span class="caption">触发类型:</span>
                <label class="pick"><input type="radio" name="edge" disabled checked>上升沿触发</label>
                <label class="pick"><input type="radio" name="edge" disabled>下降沿触发</label>
                <div class="field holdoff">
                    <label for="hold">触发释抑时间:</label>
                    <input id="hold" type="text" value="0" disabled>
                    <combo-box name="单位" value="uS" disabled></combo-box>
                </div>
                <input class="gap" type="range" value="0" disabled aria-label="触发释抑时间">
                <label class="caption" for="sens">触发灵敏度:</label>
                <input class="tight" id="sens" type="range" value="0" disabled>
            </form>
            <scroll-strip></scroll-strip>
        `;
    }
}
customElements.define('trigger-panel', TriggerPanel);


const apps = [
    ['邮件', '', `<path fill="#0f5fb4" d="M0 18L24 1l24 17v8H0z"/><path fill="#f2f6fa" d="M5 15h38v18H5z"/><path fill="#1a98e4" d="M0 16l24 18 24-18v29H0z"/><path fill="#3fc3f6" d="M0 45l48-29v29z"/>`],
    ['Edge', 'open', `<circle cx="24" cy="24" r="23" fill="#1679cc"/><path fill="#3fc4cf" d="M1 21C4 6 15 1 25 1c13 0 22 9 22 21 0 6-5 10-11 10-4 0-5-2-4-4 4-5-1-13-11-13-9 0-15 3-20 6z"/><path fill="#5fd86a" d="M32 3c11 4 15 12 15 19 0 6-5 10-11 10-4 0-5-2-4-4 6-8 4-16 0-25z"/><path fill="#0e4f95" d="M19 20c-6 9-1 20 9 22 7 2 14 0 18-6-6 12-20 14-29 8-10-8-8-19 2-24z"/>`],
    ['文件资源管理器', 'open', `<path fill="#e9a825" d="M3 6h16l4 5h22v6H3z"/><path fill="#fcd462" d="M3 13h42v28H3z"/><path fill="#3d97dc" d="M10 24h28v17h-8V31H18v10h-8z"/>`],
    ['Microsoft Store', '', `<path stroke="#28a8ea" stroke-width="3" d="M12 12V2h24v10"/><path fill="#f0f0f0" d="M1 9h46v32q0 6-6 6H7q-6 0-6-6z"/><path fill="#e8502c" d="M13 18h10v9H13z"/><path fill="#80b81c" d="M25 18h10v9H25z"/><path fill="#1ea4e8" d="M13 29h10v9H13z"/><path fill="#fbb91c" d="M25 29h10v9H25z"/>`],
    ['Player', '', `<path fill="#182a52" stroke="#f0f0f0" stroke-width="3" stroke-linejoin="round" d="M14 3l14 7q14 8 18 14-4 7-18 14l-14 7Q2 32 2 24 2 15 14 3z"/><path fill="#5ae28e" d="M14 4l14 7q-8 13 0 26l-14 7Q3 32 3 24 3 16 14 4z"/>`],
    ['uVision5', 'open', `<rect x="3" y="4" width="41" height="41" rx="4" fill="#2f7f3e"/><path fill="#f4f4f4" d="M7 7h32L24 39z"/><path stroke="#2f7f3e" stroke-width="2.500" d="M19 26V12M19 20q5 3 8 0V12v10"/><path stroke="#fff" stroke-width="2.500" d="M40 30h-7v5q7-1 7 3 0 4-7 3"/>`],
    ['VOFA+', 'open multi', `<g stroke="#f0507c" stroke-width="3"><path d="M3 4h20q7 0 7 7h6q7 0 7 8v27M3 10h18q4 0 4 6h7q6 0 6 7v23M3 16h14q4 0 4 6h5q6 0 6 6v18M3 22h10q4 0 4 6h4q5 0 5 5v13"/></g><g stroke="#1c3cf0" stroke-width="3"><path d="M3 46V38q0-4 4-4h14M9 46v-7h12M24 32h22M34 40h10"/></g>`],
    ['DSView', 'open multi', `<rect width="48" height="48" rx="9" fill="#1680e8"/><path stroke="#dff1ff" stroke-width="5" d="M2 33c4 12 15 13 20 0S30 4 38 5q6 1 8 10"/>`]
];

class TaskBar extends HTMLElement {
    constructor() {
        super();
        const list = apps.map(([name, cls, art]) => `<button type="button" class="app ${cls}" aria-label="${name}"><svg width="48" height="48" viewBox="0 0 48 48">${art}</svg></button>`).join('');
        this.attachShadow({ mode: 'open' }).innerHTML = `
            <style>${baseCss}
                :host { display: flex; flex: none; height: 80px; background: #1a222b; color: #fff; }
                button { display: grid; place-items: center; flex: none; height: 80px; }
                .start { width: 96px; }
                label {
                    display: flex;
                    align-items: center;
                    gap: 24px;
                    width: 688px;
                    padding: 0 0 2px 22px;
                    border: 2px solid #c4c4c4;
                    background: #f2f2f2;
                }
                input { flex: 1; height: 60px; font: 32px "Noto Sans CJK SC", sans-serif; outline: 0; }
                input::placeholder { color: #333; opacity: 1; }
                .view { width: 100px; }
                .app { position: relative; width: 98px; }
                .open::before { content: ""; position: absolute; left: 9px; right: 9px; bottom: 0; height: 4px; background: #76b9f5; }
                .multi::before { background: linear-gradient(90deg, #76b9f5 60px, #4a7eaa 60px); }
                .tray { display: flex; margin-left: auto; font: 24px/37px "Open Sans", "Noto Sans CJK SC", sans-serif; }
                .tray button { width: 64px; }
                .tray .pen { width: 80px; background: #333a41; }
                .tray .lang { width: 44px; font-size: 32px; }
                .tray .ime { width: 72px; }
                .ime span { display: block; width: 32px; height: 32px; background: #fff; color: #111; font-size: 26px; line-height: 30px; }
                .tray .clock { width: 146px; text-align: center; }
                .tray .mem { width: 96px; }
                .mem svg { overflow: visible; }
                .tray .note { width: 80px; margin-right: 16px; }
                .desk { width: 10px; border-left: 2px solid #6a7078; }
            </style>
            <button class="start" type="button" aria-label="开始"><svg width="32" height="32" viewBox="0 0 32 32"><path fill="#fff" d="M0 4l14-2v13H0zM15 2l17-2v15H15zM0 16h14v13L0 27zM15 16h17v16l-17-2z"/></svg></button>
            <label><svg width="32" height="32" viewBox="0 0 32 32" stroke="#111" stroke-width="2"><circle cx="20" cy="11" r="10"/><path d="M13 18L1 31"/></svg><input type="text" placeholder="在此键入进行搜索" aria-label="搜索"></label>
            <button class="view" type="button" aria-label="任务视图"><svg width="32" height="32" viewBox="0 0 32 32" stroke="#fff" stroke-width="2"><path d="M1 2v4h20V2M2 11h19v11H2zM1 31v-4h20v4M28 1v6M28 15v16"/><path stroke-width="4" d="M26 12h4"/></svg></button>
            ${list}
            <div class="tray">
                <button type="button" aria-label="显示隐藏的图标"><svg width="26" height="14" viewBox="0 0 26 14" stroke="#fff" stroke-width="2"><path d="M1 13L13 1l12 12"/></svg></button>
                <button type="button" aria-label="电池"><svg width="32" height="20" viewBox="0 0 32 20"><path stroke="#fff" stroke-width="2" d="M1 2h27v16H1zM30 6v7"/><path fill="#fff" d="M5 5h16v10H5z"/></svg></button>
                <button type="button" aria-label="网络"><svg width="26" height="26" viewBox="0 0 26 26" stroke="#fff" stroke-width="2"><path d="M1 25Q2 3 25 1M7 25Q8 9 25 7M13 25q1-11 12-12M18 25q1-6 7-7"/><circle cx="22" cy="22" r="2" fill="#fff"/></svg></button>
                <button type="button" aria-label="音量"><svg width="30" height="26" viewBox="0 0 30 26" stroke="#fff" stroke-width="2"><path d="M1 8h5l7-6v22l-7-6H1zM18 8l9 10M27 8l-9 10"/></svg></button>
                <button type="button" class="pen" aria-label="笔"><svg width="34" height="34" viewBox="0 0 34 34" stroke="#fff" stroke-width="2"><path d="M12 26L24 3q2-3 5 0 0 3-1 5L15 29l-5 3zM22 7l5 4M9 19q-7 0-8 6 0 6 8 7M24 20q9-3 8-7l-4-3"/></svg></button>
                <button type="button" class="lang">英</button>
                <button type="button" class="ime"><span>拼</span></button>
                <button type="button" class="clock"><span>1:50<br>2024/6/8</span></button>
                <button type="button" class="mem" aria-label="M"><svg width="50" height="60" viewBox="0 0 50 60"><path fill="#fff" d="M5 15l6 6v25H5zM13 20l12 14 12-14v26h-6V35l-6 6-6-6v11h-6zM39 21l6-6v31h-6z"/><circle cx="47" cy="8" r="8" fill="#f03c0c"/></svg></button>
                <button type="button" class="note" aria-label="通知"><svg width="34" height="32" viewBox="0 0 34 32" stroke="#fff" stroke-width="2"><path d="M1 1h32v24H22l-5 5-5-5H1z"/></svg></button>
                <span class="desk"></span>
            </div>
        `;
    }
}
customElements.define('task-bar', TaskBar);


class DsoApp extends HTMLElement {
    constructor() {
        super();
        this.attachShadow({ mode: 'open' }).innerHTML = `
            <style>${baseCss}
                :host { display: flex; flex-direction: column; height: 100vh; }
                main { display: grid; grid-template-columns: 1fr 6px 434px; flex: 1; min-height: 0; }
                .split { background: linear-gradient(#262626 4%, #404040 55%, #262626 95%); }
                .left { display: flex; flex-direction: column; min-height: 0; min-width: 0; }
                .scope { display: grid; grid-template-columns: 298px 1fr 60px; flex: 1; min-height: 0; }
                .view { display: flex; flex-direction: column; min-width: 0; min-height: 0; }
                wave-view { flex: 1; }
                .measures { display: grid; grid-template-columns: repeat(5, 1fr); gap: 4px 7px; margin: 5px 7px 2px 0; }
                scroll-strip { --size: 118px; --at: 46.500%; margin: 0 10px; }
            </style>
            <title-bar></title-bar>
            <tool-bar></tool-bar>
            <main>
                <div class="left">
                    <div class="scope">
                        <channel-panel></channel-panel>
                        <div class="view">
                            <time-ruler></time-ruler>
                            <wave-view></wave-view>
                            <div class="measures">
                                <measure-cell ch="0" icon="freq">频率:27.98kHz</measure-cell>
                                <measure-cell ch="0" icon="max">最大值:13.19V</measure-cell>
                                <measure-cell ch="0" icon="min">最小值:-5.96V</measure-cell>
                                <measure-cell>测量3</measure-cell>
                                <measure-cell>测量4</measure-cell>
                                <measure-cell ch="1" icon="freq">频率:1.71kHz</measure-cell>
                                <measure-cell ch="1" icon="max">最大值:5.49V</measure-cell>
                                <measure-cell ch="1" icon="min">最小值:-680.85mV</measure-cell>
                                <measure-cell>测量8</measure-cell>
                                <measure-cell>测量9</measure-cell>
                            </div>
                        </div>
                    </div>
                    <scroll-strip></scroll-strip>
                </div>
                <div class="split"></div>
                <trigger-panel></trigger-panel>
            </main>
            <task-bar></task-bar>
        `;
    }
}
customElements.define('dso-app', DsoApp);
</script>
</body>
</html>
